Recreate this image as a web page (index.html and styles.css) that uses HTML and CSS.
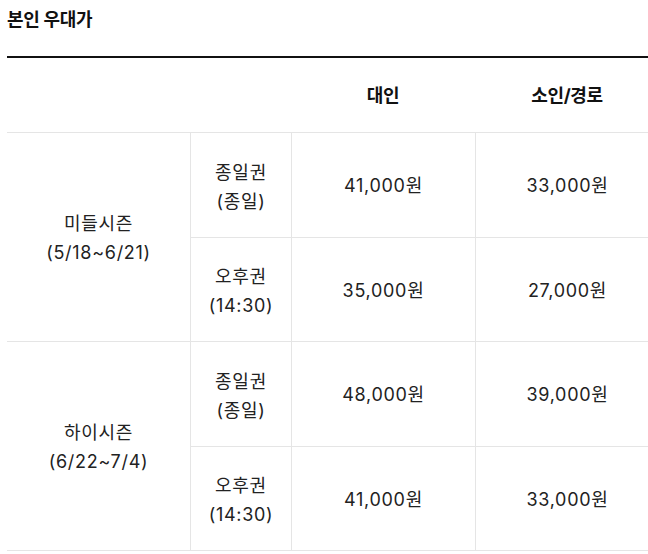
FILE: index.html
```html
<!DOCTYPE html>
<html lang="ko">
<head>
<meta charset="utf-8">
<title>본인 우대가</title>
<link rel="stylesheet" href="styles.css">
</head>
<body>
<div class="page">
  <h2 class="title">본인 우대가</h2>
  <div class="price-table">
    <div class="cell head blank"></div>
    <div class="cell head">대인</div>
    <div class="cell head">소인/경로</div>

    <div class="cell season s1">미들시즌<br>(5/18~6/21)</div>
    <div class="cell sub line">종일권<br>(종일)</div>
    <div class="cell price line">41,000원</div>
    <div class="cell price line">33,000원</div>
    <div class="cell sub line">오후권<br>(14:30)</div>
    <div class="cell price line">35,000원</div>
    <div class="cell price line">27,000원</div>

    <div class="cell season s2">하이시즌<br>(6/22~7/4)</div>
    <div class="cell sub line">종일권<br>(종일)</div>
    <div class="cell price line">48,000원</div>
    <div class="cell price line">39,000원</div>
    <div class="cell sub line">오후권<br>(14:30)</div>
    <div class="cell price line">41,000원</div>
    <div class="cell price line">33,000원</div>
  </div>
</div>
</body>
</html>
```

FILE: styles.css
```css
html, body {
  margin: 0;
  padding: 0;
  background: #fff;
  overflow: hidden;
}

.page {
  padding: 0 0 0 7px;
  font-family: Inter, "Noto Sans CJK KR", sans-serif;
  color: #222;
  width: 652px;
}

.title {
  margin: 0;
  padding-top: 7px;
  height: 56px;
  box-sizing: border-box;
  font-size: 18px;
  line-height: 26px;
  font-weight: 700;
  color: #111;
  letter-spacing: -0.3px;
}

.price-table {
  display: grid;
  grid-template-columns: 183px 101px 184px 184px;
  grid-template-rows: 75px 105px 104px 105px 104px;
  border-top: 2px solid #111;
}

.cell {
  box-sizing: border-box;
  display: flex;
  align-items: center;
  justify-content: center;
  text-align: center;
  font-size: 18px;
  line-height: 29px;
  border-bottom: 1px solid #e5e5e5;
  letter-spacing: 0.7px;
}

.head {
  font-weight: 700;
  color: #111;
  letter-spacing: -0.3px;
}

.head.blank {
  grid-column: span 2;
}

.season {
  grid-row: span 2;
  padding-top: 1px;
}

.price {
  padding-top: 1px;
}

.line {
  border-left: 1px solid #e5e5e5;
}

.sub {
  padding-top: 3px;
}
```
